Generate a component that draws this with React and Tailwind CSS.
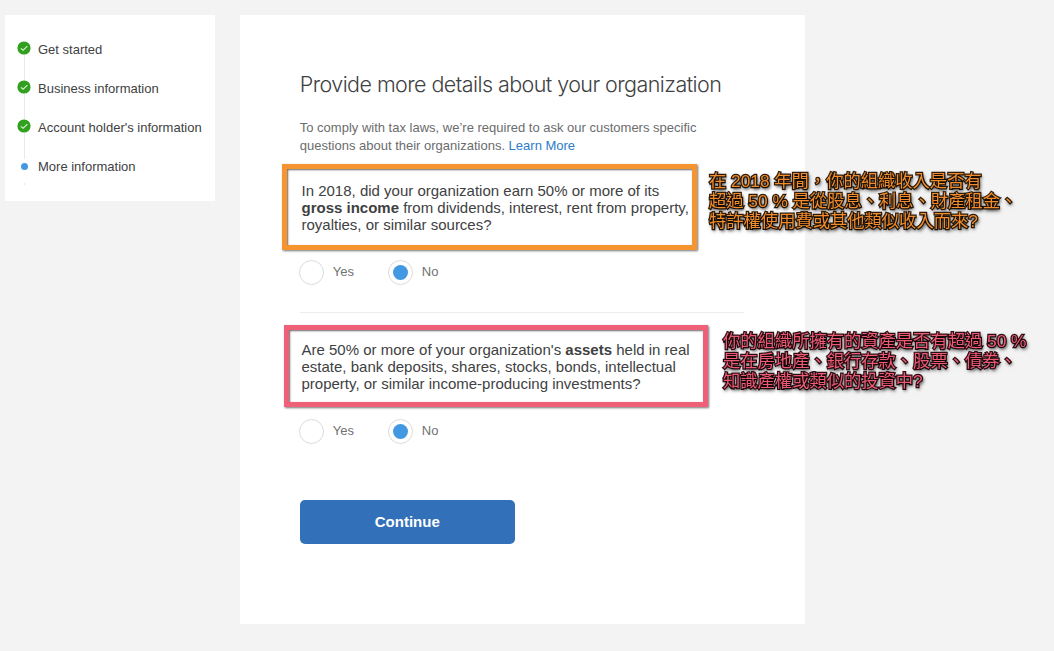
import React from 'react';

const steps = [
  { label: 'Get started', done: true },
  { label: 'Business information', done: true },
  { label: "Account holder's information", done: true },
  { label: 'More information', done: false },
];

function CheckBadge() {
  return (
    <svg width="14" height="14" viewBox="0 0 14 14" className="relative -top-[0.5px] block">
      <circle cx="7" cy="7" r="6.6" fill="#31a01f" />
      <path d="M3.8 7.3 L6.1 9.2 L10.4 5.2" fill="none" stroke="#d8efd3" strokeWidth="1.1" />
    </svg>
  );
}

function Sidebar() {
  return (
    <aside className="mt-[14.5px] ml-[5px] h-[186px] w-[210px] shrink-0 bg-white pt-[14.5px] pl-[12px]">
      <ul>
        {steps.map((step) => (
          <li key={step.label} className="flex h-[39px] items-center">
            <span className="relative flex h-[39px] w-[14px] items-center justify-center">
              <span
                className={
                  step.done
                    ? 'absolute top-[26px] left-[7px] h-[26px] w-px bg-[#e9e9e9]'
                    : 'absolute top-[37px] left-[7px] h-[2px] w-px bg-[#e9e9e9]'
                }
              />
              {step.done ? <CheckBadge /> : <span className="mt-px size-[7px] rounded-full bg-[#4299e1]" />}
            </span>
            <span className="ml-[7px] pt-[2px] text-[13px] leading-[16px] whitespace-nowrap text-[#404142]">
              {step.label}
            </span>
          </li>
        ))}
      </ul>
    </aside>
  );
}

function Radio({ label, checked }) {
  return (
    <label className="flex items-center">
      <span className="flex size-[25px] items-center justify-center rounded-full border border-[#dcdcdc] bg-white">
        {checked && <span className="size-[15px] rounded-full bg-[#4299e1]" />}
      </span>
      <span className="ml-[9px] pb-px text-[13px] leading-[16px] text-[#717273]">{label}</span>
    </label>
  );
}

function YesNo() {
  return (
    <div className="-ml-[1px] flex h-[25px]">
      <div className="w-[89px]">
        <Radio label="Yes" />
      </div>
      <Radio label="No" checked />
    </div>
  );
}

export default function App() {
  return (
    <div className="relative flex h-[651px] w-[1054px] overflow-hidden bg-[#f3f3f3] font-['Liberation_Sans',Arial,sans-serif]">
      <Sidebar />

      <main className="mt-[14.5px] ml-[24.5px] h-[609.5px] w-[565.5px] shrink-0 bg-white pl-[60.25px]">
        <h1 className="pt-[54.5px] font-['Inter','Liberation_Sans',sans-serif] text-[21.5px] leading-[30px] font-light tracking-[-0.56px] whitespace-nowrap text-[#404142]">
          Provide more details about your organization
        </h1>
        <p className="mt-[19.5px] text-[13px] leading-[18px] whitespace-nowrap text-[#6b6c6d]">
          To comply with tax laws, we’re required to ask our customers specific
          <br />
          questions about their organizations. <a className="text-[#2b7cc9]">Learn More</a>
        </p>

        <section className="mt-[9px] -ml-[17.75px] h-[86px] w-[414.5px] border-[5px] border-[#f6942f] pt-[13.5px] pl-[14.5px] shadow-[1px_1px_2px_rgba(0,0,0,0.55),inset_1px_1px_2px_rgba(0,0,0,0.6)]">
          <p className="text-[15px] leading-[17.2px] whitespace-nowrap text-[#404142]">
            In 2018, did your organization earn 50% or more of its
            <br />
            <b>gross income</b> from dividends, interest, rent from property,
            <br />
            royalties, or similar sources?
          </p>
        </section>

        <div className="mt-[10px]">
          <YesNo />
        </div>

        <div className="mt-[27px] h-px w-[444px] bg-[#ececec]" />

        <section className="mt-[12.5px] -ml-[15.75px] h-[81.5px] w-[424px] border-[5px] border-[#ef5f78] pt-[10.5px] pl-[12.5px] shadow-[1px_1px_2px_rgba(0,0,0,0.55),inset_1px_1px_2px_rgba(0,0,0,0.6)]">
          <p className="text-[15px] leading-[17.2px] whitespace-nowrap text-[#404142]">
            Are 50% or more of your organization's <b>assets</b> held in real
            <br />
            estate, bank deposits, shares, stocks, bonds, intellectual
            <br />
            property, or similar income-producing investments?
          </p>
        </section>

        <div className="mt-[12px]">
          <YesNo />
        </div>

        <button className="mt-[56px] flex h-[44px] w-[215px] items-center justify-center rounded-[5px] bg-[#3270b9] pt-[2px] text-[15px] font-bold text-white">
          Continue
        </button>
      </main>

      <p className="absolute top-[171px] left-[709px] font-['Liberation_Sans','Noto_Sans_CJK_TC',sans-serif] text-[17.3px] leading-[20px] whitespace-nowrap text-[#f08c2c] will-change-transform [paint-order:stroke_fill] [-webkit-text-stroke:2.4px_#33200d] [text-shadow:1px_2px_3px_rgba(0,0,0,0.8),1px_2px_4px_rgba(0,0,0,0.8)]">
        在 2018 年間，你的組織收入是否有
        <br />
        超過 50 % 是從股息、利息、財產租金、
        <br />
        特許權使用費或其他類似收入而來?
      </p>

      <p className="absolute top-[331px] left-[723px] font-['Liberation_Sans','Noto_Sans_CJK_TC',sans-serif] text-[17.3px] leading-[20px] whitespace-nowrap text-[#ec5a74] will-change-transform [paint-order:stroke_fill] [-webkit-text-stroke:2.4px_#331018] [text-shadow:1px_2px_3px_rgba(0,0,0,0.8),1px_2px_4px_rgba(0,0,0,0.8)]">
        你的組織所擁有的資產是否有超過 50 %
        <br />
        是在房地產、銀行存款、股票、債券、
        <br />
        知識產權或類似的投資中?
      </p>
    </div>
  );
}
